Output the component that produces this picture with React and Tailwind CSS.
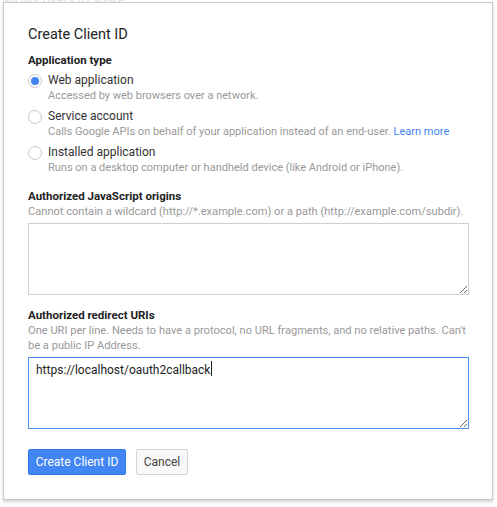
import React, { useEffect, useRef, useState } from 'react';

const appTypes = [
  { id: 'web', label: 'Web application', hint: 'Accessed by web browsers over a network.' },
  {
    id: 'service',
    label: 'Service account',
    hint: 'Calls Google APIs on behalf of your application instead of an end-user.',
    link: 'Learn more',
  },
  {
    id: 'installed',
    label: 'Installed application',
    hint: 'Runs on a desktop computer or handheld device (like Android or iPhone).',
  },
];

const Radio = ({ checked }) => (
  <span className="mt-[1px] flex h-[14px] w-[14px] shrink-0 items-center justify-center rounded-full border border-[#c8c8c8] bg-white">
    {checked && <span className="h-[8px] w-[8px] rounded-full bg-[#4285f4]" />}
  </span>
);

const App = () => {
  const [appType, setAppType] = useState('web');
  const redirectRef = useRef(null);

  // put the caret after the prefilled redirect uri
  useEffect(() => {
    const el = redirectRef.current;
    if (!el) return;
    el.focus();
    const end = el.value.length;
    el.setSelectionRange(end, end);
  }, []);

  return (
    <div className="relative h-[507px] w-[497px] overflow-hidden bg-white font-['Roboto',sans-serif]">
      {/* page behind the dialog */}
      <div className="-mt-[8px] pl-[2px] text-[13px] leading-[16px] text-[#e2e2e2]">
        allows users to share
      </div>

      <div className="absolute left-[3px] top-[2px] flex h-[498px] w-[490px] flex-col border border-[#c9c9c9] bg-white px-[24px] pt-[22px] shadow-[0_2px_3px_rgba(0,0,0,0.18)]">
        <h2 className="text-[14.5px] leading-[20px] text-[#222]">Create Client ID</h2>

        <div className="mt-[8px] text-[11.5px] font-bold leading-[15px] text-[#222]">Application type</div>

        <div className="mt-[5px] flex flex-col gap-[6px]">
          {appTypes.map((t) => (
            <label key={t.id} className="flex cursor-pointer items-start gap-[6px]" onClick={() => setAppType(t.id)}>
              <Radio checked={appType === t.id} />
              <span className="flex flex-col">
                <span className="text-[12px] leading-[15px] text-[#333]">{t.label}</span>
                <span className="text-[11px] leading-[15px] text-[#999]">
                  {t.hint}
                  {t.link && <span className="text-[#4285f4]"> {t.link}</span>}
                </span>
              </span>
            </label>
          ))}
        </div>

        <div className="mt-[14px] text-[11.5px] font-bold leading-[15px] text-[#222]">Authorized JavaScript origins</div>
        <div className="text-[11.1px] leading-[15px] text-[#999]">
          Cannot contain a wildcard (http://*.example.com) or a path (http://example.com/subdir).
        </div>
        <textarea className="mt-[4px] h-[72px] w-[441px] border border-[#d0d0d0] px-[7px] py-[5px] text-[12px] leading-[16px] text-[#222] outline-none" />

        <div className="mt-[13px] text-[11.5px] font-bold leading-[15px] text-[#222]">Authorized redirect URIs</div>
        <div className="w-[441px] text-[11.1px] leading-[15px] text-[#999]">
          One URI per line. Needs to have a protocol, no URL fragments, and no relative paths. Can't be a public IP Address.
        </div>
        <div className="relative mt-[4px] w-[441px]">
          <textarea
            ref={redirectRef}
            defaultValue="https://localhost/oauth2callback"
            className="block h-[72px] w-full border border-[#4d90fe] px-[7px] py-[4px] text-[12px] leading-[16px] text-[#222] caret-[#222] outline-none"
          />
          {/* text cursor drawn over the field */}
          <span className="pointer-events-none absolute left-[183px] top-[4px] h-[15px] w-px bg-[#222]" />
        </div>

        <div className="mt-[20px] flex gap-[10px]">
          <button className="h-[26px] w-[98px] rounded-[2px] border border-[#3079ed] bg-[#4285f4] text-[12px] text-white">
            Create Client ID
          </button>
          <button className="h-[26px] w-[52px] rounded-[2px] border border-[#d5d5d5] bg-[#f8f8f8] text-[12px] text-[#444]">
            Cancel
          </button>
        </div>
      </div>
    </div>
  );
};

export default App;
